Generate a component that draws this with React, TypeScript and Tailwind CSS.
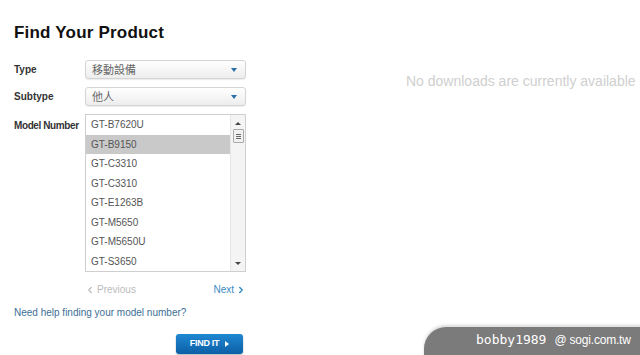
import { ChevronLeft, ChevronRight } from "lucide-react";

const models = [
  "GT-B7620U",
  "GT-B9150",
  "GT-C3310",
  "GT-C3310",
  "GT-E1263B",
  "GT-M5650",
  "GT-M5650U",
  "GT-S3650",
];

const Select = ({ value }: { value: string }) => (
  <div className="w-[161px] h-[19px] rounded-[3px] border border-[#d4d4d4] bg-gradient-to-b from-white to-[#ededed] flex items-center justify-between pl-[6px] pr-[8px] shadow-[0_1px_1px_rgba(0,0,0,0.08)]">
    <span className="text-[11px] text-[#666] font-['Noto_Sans_CJK_TC',sans-serif] leading-none">{value}</span>
    <span className="w-0 h-0 border-l-[3px] border-r-[3px] border-t-[4px] border-l-transparent border-r-transparent border-t-[#2a6fa8]" />
  </div>
);

const App = () => {
  return (
    <div className="w-[640px] h-[355px] bg-white relative overflow-hidden font-['Liberation_Sans',Arial,sans-serif]">
      <div className="flex">
        {/* Left: form */}
        <div className="w-[260px] pl-[14px] pt-[22px]">
          <h1 className="text-[17px] font-bold text-[#111] leading-[22px] tracking-[0.2px]">Find Your Product</h1>

          <div className="mt-[16px] flex items-center">
            <span className="w-[71px] text-[10px] font-bold text-[#333]">Type</span>
            <Select value="移動設備" />
          </div>
          <div className="mt-[8px] flex items-center">
            <span className="w-[71px] text-[10px] font-bold text-[#333]">Subtype</span>
            <Select value="他人" />
          </div>

          <div className="mt-[8px] flex items-start">
            <span className="w-[71px] text-[10px] font-bold text-[#333] pt-[4px] tracking-[-0.4px] whitespace-nowrap">Model Number</span>
            <div className="w-[161px] h-[158px] border border-[#cfcfcf] flex">
              <div className="flex-1 flex flex-col">
                {models.map((m, i) => (
                  <div
                    key={i}
                    className={`h-[19.6px] flex items-center pl-[5px] text-[10px] text-[#555] ${i === 1 ? "bg-[#c9c9c9]" : ""}`}
                  >
                    {m}
                  </div>
                ))}
              </div>
              <div className="w-[15px] bg-[#f4f4f4] border-l border-[#e6e6e6] flex flex-col items-center justify-between">
                <div className="h-[16px] flex items-center justify-center">
                  <span className="w-0 h-0 border-l-[3px] border-r-[3px] border-b-[3px] border-l-transparent border-r-transparent border-b-[#444]" />
                </div>
                <div className="w-[11px] h-[14px] -mt-[2px] border border-[#aaa] bg-[#f0f0f0] rounded-[1px] flex flex-col items-center justify-center gap-[1px]">
                  <span className="w-[5px] h-px bg-[#666]" />
                  <span className="w-[5px] h-px bg-[#666]" />
                  <span className="w-[5px] h-px bg-[#666]" />
                </div>
                <div className="flex-1" />
                <div className="h-[16px] flex items-center justify-center">
                  <span className="w-0 h-0 border-l-[3px] border-r-[3px] border-t-[3px] border-l-transparent border-r-transparent border-t-[#444]" />
                </div>
              </div>
            </div>
          </div>

          <div className="ml-[71px] w-[161px] mt-[10px] flex justify-between items-center text-[10px]">
            <span className="flex items-center text-[#bbb]">
              <ChevronLeft className="w-[10px] h-[10px]" strokeWidth={3} />
              <span className="ml-[2px]">Previous</span>
            </span>
            <span className="flex items-center text-[#3a8cc4]">
              Next
              <ChevronRight className="w-[10px] h-[10px] ml-[2px]" strokeWidth={3.5} />
            </span>
          </div>

          <div className="mt-[8px] text-[10px] text-[#3d6f96]">Need help finding your model number?</div>

          <div className="mt-[14px] ml-[162px] w-[67px] h-[20px] rounded-[3px] bg-gradient-to-b from-[#2088d2] to-[#0b5fa6] shadow-[0_1px_2px_rgba(0,0,0,0.3)] flex items-center justify-center gap-[6px]">
            <span className="text-[9px] font-bold text-white tracking-[-0.3px]">FIND IT</span>
            <span className="w-0 h-0 border-t-[3px] border-b-[3px] border-l-[4px] border-t-transparent border-b-transparent border-l-white" />
          </div>
        </div>

        {/* Right: results */}
        <div className="flex-1 pt-[71px] pl-[146px]">
          <p className="text-[14px] text-[#cfcfcf] whitespace-nowrap">No downloads are currently available</p>
        </div>
      </div>

      {/* Watermark */}
      <div className="absolute left-[424px] top-[327px] w-[230px] h-[40px] rounded-tl-[22px] bg-[#7b7b7b] shadow-[0_-2px_3px_rgba(0,0,0,0.15)] flex items-start pt-[5px] pl-[52px]">
        <span className="text-[13px] text-white font-['DejaVu_Sans_Mono',monospace] leading-[16px]">bobby1989</span>
        <span className="ml-[8px] text-[12px] text-white font-['Liberation_Sans',Arial,sans-serif] leading-[16px] tracking-[-0.2px]">@ sogi.com.tw</span>
      </div>
    </div>
  );
};

export default App;
